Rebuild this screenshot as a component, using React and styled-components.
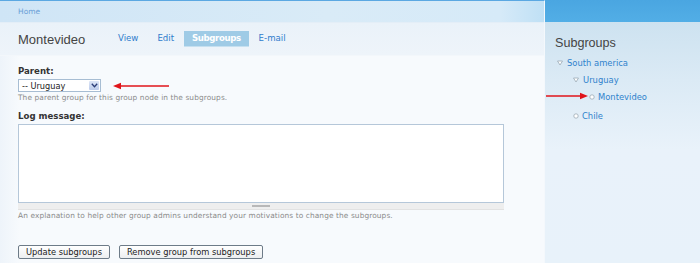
import styled, { createGlobalStyle } from "styled-components";

const GlobalStyle = createGlobalStyle`
  html, body {
    margin: 0;
    padding: 0;
  }
  body {
    width: 700px;
    height: 263px;
    overflow: hidden;
    font-family: "DejaVu Sans", Verdana, sans-serif;
    background: #e8f2fa;
  }
`;

function TreeBullet({ open }) {
  return open ? (
    <svg width="6" height="6" viewBox="0 0 6 6">
      <path d="M0.5 1 L5.5 1 L3 5 Z" fill="#fff" stroke="#9aa9b5" strokeWidth="0.8" />
    </svg>
  ) : (
    <svg width="6" height="6" viewBox="0 0 6 6">
      <circle cx="3" cy="3" r="2.2" fill="#fff" stroke="#9aa9b5" strokeWidth="0.8" />
    </svg>
  );
}

function RedArrow({ width, dir }) {
  const left = dir === "left";
  return (
    <svg width={width} height="8" viewBox={`0 0 ${width} 8`}>
      {left ? (
        <>
          <line x1="6" y1="4" x2={width} y2="4" stroke="#e0141a" strokeWidth="1.4" />
          <path d="M0 4 L8 0.8 L8 7.2 Z" fill="#e0141a" />
        </>
      ) : (
        <>
          <line x1="0" y1="4" x2={width - 6} y2="4" stroke="#e0141a" strokeWidth="1.4" />
          <path d={`M${width} 4 L${width - 8} 0.8 L${width - 8} 7.2 Z`} fill="#e0141a" />
        </>
      )}
    </svg>
  );
}

const tabs = ["View", "Edit", "Subgroups", "E-mail"];

export default function App() {
  return (
    <Page>
      <GlobalStyle />
      <Main>
        <Breadcrumb>
          <a>Home</a>
        </Breadcrumb>
        <TitleRow>
          <Title>Montevideo</Title>
          <Tabs>
            {tabs.map((t) => (
              <Tab key={t} $active={t === "Subgroups"}>
                {t}
              </Tab>
            ))}
          </Tabs>
        </TitleRow>
        <Content>
          <Label>Parent:</Label>
          <SelectRow>
            <Select>
              <span>-- Uruguay</span>
              <SelectButton>
                <svg width="7" height="5" viewBox="0 0 7 5">
                  <path d="M0.8 0.8 L3.5 3.8 L6.2 0.8" fill="none" stroke="#2c3e78" strokeWidth="1.3" />
                </svg>
              </SelectButton>
            </Select>
            <RedArrow width={56} dir="left" />
          </SelectRow>
          <Help>The parent group for this group node in the subgroups.</Help>

          <Label $top={8}>Log message:</Label>
          <TextArea />
          <Grippie>
            <span />
          </Grippie>
          <Help>
            An explanation to help other group admins understand your motivations to change the
            subgroups.
          </Help>

          <Buttons>
            <Button>Update subgroups</Button>
            <Button>Remove group from subgroups</Button>
          </Buttons>
        </Content>
      </Main>

      <Sidebar>
        <SidebarHead />
        <SidebarBody>
          <BlockTitle>Subgroups</BlockTitle>
          <Tree>
            <Node>
              <TreeBullet open />
              <a>South america</a>
            </Node>
            <Tree $indent={16}>
              <Node>
                <TreeBullet open />
                <a>Uruguay</a>
              </Node>
              <Tree $indent={16}>
                <Node $gap={3}>
                  <TreeBullet />
                  <a>Montevideo</a>
                </Node>
              </Tree>
            </Tree>
            <Tree $indent={16}>
              <Node $gap={3}>
                <TreeBullet />
                <a>Chile</a>
              </Node>
            </Tree>
          </Tree>
        </SidebarBody>
      </Sidebar>

      <SideArrow>
        <RedArrow width={42} dir="right" />
      </SideArrow>
    </Page>
  );
}

const Page = styled.div`
  position: relative;
  display: flex;
  width: 700px;
  height: 263px;
`;

const Main = styled.div`
  width: 544px;
  display: flex;
  flex-direction: column;
  border-top: 1px solid #5ba8e2;
  border-right: 1px solid #f4f8fc;
  background: linear-gradient(90deg, #eef4fa 0px, #f7fafd 20px, #f7fafd 100%);
`;

const Breadcrumb = styled.div`
  height: 21px;
  padding-left: 18px;
  display: flex;
  align-items: center;
  background: linear-gradient(90deg, #cfe5f6 0%, #d9ebf7 60%, #d6eaf8 92%, #bfe0f5 100%);
  border-bottom: 1px solid #e4eef7;

  a {
    font-size: 7.5px;
    color: #6a9fd6;
  }
`;

const TitleRow = styled.div`
  height: 32px;
  display: flex;
  align-items: center;
  padding-left: 18px;
  background: linear-gradient(180deg, #eaf2f9 0%, #eef4fa 100%);
  border-bottom: 1px solid #f3f7fb;
`;

const Title = styled.h1`
  margin: 0;
  width: 91px;
  font-family: "Liberation Sans", Arial, sans-serif;
  font-size: 13px;
  font-weight: normal;
  color: #444;
`;

const Tabs = styled.div`
  display: flex;
  align-items: center;
`;

const Tab = styled.a`
  font-size: 8.6px;
  padding: 2px ${(p) => (p.$active ? 8 : 9)}px;
  margin-right: 1px;
  color: ${(p) => (p.$active ? "#fff" : "#2f7ccc")};
  font-weight: ${(p) => (p.$active ? "bold" : "normal")};
  letter-spacing: ${(p) => (p.$active ? "-0.4px" : "0")};
  background: ${(p) => (p.$active ? "#9fcbe6" : "transparent")};
  border-bottom: 1px solid ${(p) => (p.$active ? "#c6e0f0" : "transparent")};
  line-height: 11px;
`;

const Content = styled.div`
  flex: 1;
  padding: 10px 0 0 18px;
  display: flex;
  flex-direction: column;
  align-items: flex-start;
`;

const Label = styled.label`
  font-size: 8.6px;
  font-weight: bold;
  color: #333;
  line-height: 11px;
  margin-top: ${(p) => p.$top || 0}px;
  margin-bottom: 2px;
`;

const SelectRow = styled.div`
  display: flex;
  align-items: center;
  gap: 12px;
`;

const Select = styled.div`
  width: 78px;
  height: 11px;
  display: flex;
  align-items: center;
  justify-content: space-between;
  border: 1px solid #a7bdd3;
  background: #fff;
  padding-left: 3px;

  span {
    font-size: 8.2px;
    color: #222;
  }
`;

const SelectButton = styled.div`
  width: 10px;
  height: 9px;
  margin-right: 1px;
  display: flex;
  align-items: center;
  justify-content: center;
  background: linear-gradient(180deg, #dde6f7, #bccbea);
  border-radius: 1px;
`;

const Help = styled.div`
  font-size: 7.4px;
  color: #8a8a8a;
  line-height: 10px;
  margin-top: 1px;
  letter-spacing: 0.1px;
`;

const TextArea = styled.div`
  width: 484px;
  height: 77px;
  background: #fff;
  border: 1px solid #b5c7d9;
`;

const Grippie = styled.div`
  width: 486px;
  height: 6px;
  background: #eeeeee;
  border-bottom: 1px solid #e2e2e2;
  display: flex;
  justify-content: center;
  align-items: center;

  span {
    width: 18px;
    height: 2px;
    background: #b8b8b8;
  }
`;

const Buttons = styled.div`
  display: flex;
  gap: 9px;
  margin-top: 24px;
`;

const Button = styled.button`
  font-family: "DejaVu Sans", Verdana, sans-serif;
  font-size: 8.3px;
  color: #222;
  height: 14px;
  padding: 0 7px;
  line-height: 12px;
  border: 1px solid #6d7b88;
  border-radius: 2px;
  background: linear-gradient(180deg, #ffffff 0%, #eceef0 100%);
`;

const Sidebar = styled.div`
  flex: 1;
  display: flex;
  flex-direction: column;
  background: linear-gradient(180deg, #cde2f0 21px, #dbeaf5 80px, #e9f2fa 150px, #e8f2fa 100%);
`;

const SidebarHead = styled.div`
  height: 22px;
  background: linear-gradient(180deg, #4aa6e1, #52aee6);
`;

const SidebarBody = styled.div`
  padding: 13px 0 0 10px;
`;

const BlockTitle = styled.h2`
  margin: 0 0 3px;
  font-family: "Liberation Sans", Arial, sans-serif;
  font-size: 12.6px;
  font-weight: normal;
  color: #444;
  line-height: 16px;
`;

const Tree = styled.div`
  padding-left: ${(p) => p.$indent || 2}px;
`;

const Node = styled.div`
  display: flex;
  align-items: center;
  gap: ${(p) => p.$gap || 4}px;
  height: 17px;
  margin-bottom: ${(p) => (p.$gap ? 2 : 0)}px;

  a {
    font-size: 8.4px;
    color: #2f82cc;
  }
`;

const SideArrow = styled.div`
  position: absolute;
  left: 546px;
  top: 92px;
  display: flex;
`;
